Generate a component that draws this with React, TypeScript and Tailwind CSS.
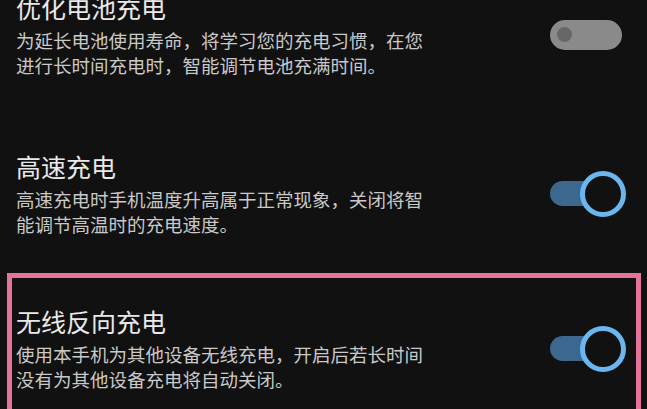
const FONT = "font-['Noto_Sans_CJK_SC','Noto_Sans',sans-serif]";

const OffToggle = () => (
  <div className="flex w-[76px] items-center">
    <div className="flex h-[30px] w-[72px] items-center rounded-full bg-[#8a8a8a] pl-[7px]">
      <div className="h-[15px] w-[15px] rounded-full bg-[#676767]" />
    </div>
  </div>
);

const OnToggle = () => (
  <div className="relative flex h-[46px] w-[76px] items-center">
    <div className="h-[25px] w-[50px] rounded-full bg-[#3c6890]" />
    <div className="absolute right-0 top-0 h-[46px] w-[46px] rounded-full border-[5px] border-[#6cb6ef] bg-[#111111]" />
  </div>
);

type RowProps = {
  title: string;
  desc: string;
  on: boolean;
  className?: string;
};

const SettingRow = ({ title, desc, on, className = "" }: RowProps) => (
  <div className={`flex items-center justify-between ${className}`}>
    <div className="w-[420px]">
      <p className="text-[25px] leading-[32px] text-[#e9e9e9]">{title}</p>
      <p className="mt-[5px] text-[18.5px] leading-[25px] text-[#c9c9c9]">
        {desc}
      </p>
    </div>
    {on ? <OnToggle /> : <OffToggle />}
  </div>
);

export default function App() {
  return (
    <div
      className={`h-[409px] w-[647px] overflow-hidden bg-[#111111] ${FONT}`}
    >
      <SettingRow
        className="-mt-[9px] pl-[16px] pr-[21px]"
        title="优化电池充电"
        desc="为延长电池使用寿命，将学习您的充电习惯，在您进行长时间充电时，智能调节电池充满时间。"
        on={false}
      />
      <SettingRow
        className="mt-[72px] pl-[16px] pr-[21px]"
        title="高速充电"
        desc="高速充电时手机温度升高属于正常现象，关闭将智能调节高温时的充电速度。"
        on
      />
      <div className="ml-[7px] mr-[6px] mt-[36px] border-[5px] border-b-0 border-[#e5739a] pb-[40px] pl-[4px] pr-[10px] pt-[27px]">
        <SettingRow
          title="无线反向充电"
          desc="使用本手机为其他设备无线充电，开启后若长时间没有为其他设备充电将自动关闭。"
          on
        />
      </div>
    </div>
  );
}
